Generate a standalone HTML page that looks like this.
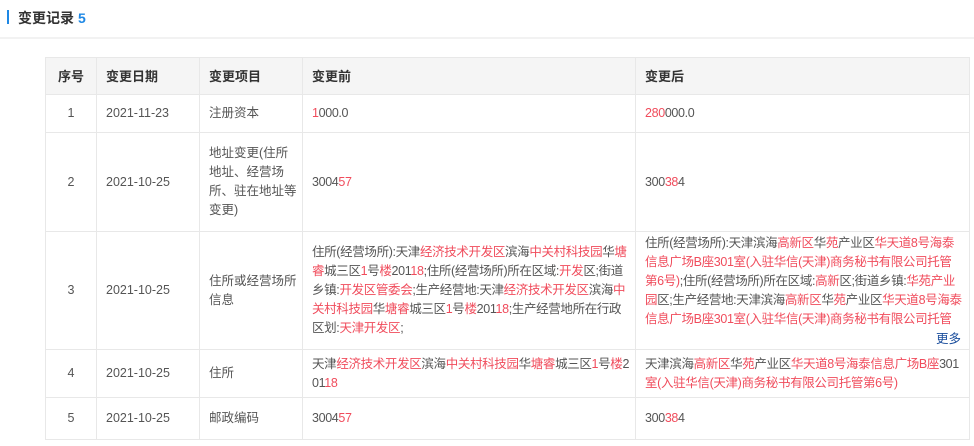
<!DOCTYPE html>
<html><head><meta charset="utf-8"><style>
body{margin:0;width:974px;height:446px;background:#fff;font-family:"Liberation Sans","Noto Sans CJK SC",sans-serif;color:#555;font-size:12.5px;overflow:hidden;position:relative}
.hd{position:absolute;left:0;top:0;width:974px;height:37px;border-bottom:2px solid #f2f2f2}
.bar{position:absolute;left:7px;top:10px;width:2px;height:14px;background:#1e88e5}
.tt{position:absolute;left:18px;top:8px;font-size:14px;font-weight:bold;color:#333}
.tt b{color:#1e88e5;margin-left:4px}
table{position:absolute;left:45px;top:57px;width:924px;border-collapse:collapse;table-layout:fixed}
td,th{border:1px solid #e8e8e8;padding:0 9px;line-height:19px;text-align:left;vertical-align:middle;font-weight:normal;white-space:nowrap;overflow:hidden}
td:nth-child(4),td:nth-child(5){letter-spacing:-0.35px}
th{background:#f5f5f5;font-weight:bold;color:#333;height:36px;font-size:13px}
td:first-child,th:first-child{text-align:center}
.r{color:#f04c5c}
.more{color:#1a4d9c;text-align:right;display:block;margin-top:1px;margin-right:-1px;letter-spacing:0}
</style></head><body>
<div class="hd"><div class="bar"></div><div class="tt">变更记录<b>5</b></div></div>
<table>
<colgroup><col style="width:51px"><col style="width:103px"><col style="width:103px"><col style="width:333px"><col style="width:334px"></colgroup>
<tr><th>序号</th><th>变更日期</th><th>变更项目</th><th>变更前</th><th>变更后</th></tr>
<tr style="height:38px"><td>1</td><td>2021-11-23</td><td>注册资本</td><td><span class="r">1</span>000.0</td><td><span class="r">280</span>000.0</td></tr>
<tr style="height:99px"><td>2</td><td>2021-10-25</td><td>地址变更(住所<br>地址、经营场<br>所、驻在地址等<br>变更)</td><td>3004<span class="r">57</span></td><td>300<span class="r">38</span>4</td></tr>
<tr style="height:115px"><td>3</td><td>2021-10-25</td><td>住所或经营场所<br>信息</td><td>住所(经营场所):天津<span class="r">经济技术开发区</span>滨海<span class="r">中关村科技园</span>华<span class="r">塘</span><br><span class="r">睿</span>城三区<span class="r">1</span>号<span class="r">楼</span>201<span class="r">18</span>;住所(经营场所)所在区域:<span class="r">开发</span>区;街道<br>乡镇:<span class="r">开发区管委会</span>;生产经营地:天津<span class="r">经济技术开发区</span>滨海<span class="r">中</span><br><span class="r">关村科技园</span>华<span class="r">塘睿</span>城三区<span class="r">1</span>号<span class="r">楼</span>201<span class="r">18</span>;生产经营地所在行政<br>区划:<span class="r">天津开发区</span>;</td><td style="padding-top:2px">住所(经营场所):天津滨海<span class="r">高新区</span>华<span class="r">苑</span>产业区<span class="r">华天道8号海泰</span><br><span class="r">信息广场B座301室(入驻华信(天津)商务秘书有限公司托管</span><br><span class="r">第6号)</span>;住所(经营场所)所在区域:<span class="r">高新</span>区;街道乡镇:<span class="r">华苑产业</span><br><span class="r">园</span>区;生产经营地:天津滨海<span class="r">高新区</span>华<span class="r">苑</span>产业区<span class="r">华天道8号海泰</span><br><span class="r">信息广场B座301室(入驻华信(天津)商务秘书有限公司托管</span><span class="more">更多</span></td></tr>
<tr style="height:48px"><td>4</td><td>2021-10-25</td><td>住所</td><td>天津<span class="r">经济技术开发区</span>滨海<span class="r">中关村科技园</span>华<span class="r">塘睿</span>城三区<span class="r">1</span>号<span class="r">楼</span>2<br>01<span class="r">18</span></td><td>天津滨海<span class="r">高新区</span>华<span class="r">苑</span>产业区<span class="r">华天道8号海泰信息广场B座</span>301<br><span class="r">室(入驻华信(天津)商务秘书有限公司托管第6号)</span></td></tr>
<tr style="height:42px"><td>5</td><td>2021-10-25</td><td>邮政编码</td><td>3004<span class="r">57</span></td><td>300<span class="r">38</span>4</td></tr>
</table>
</body></html>
